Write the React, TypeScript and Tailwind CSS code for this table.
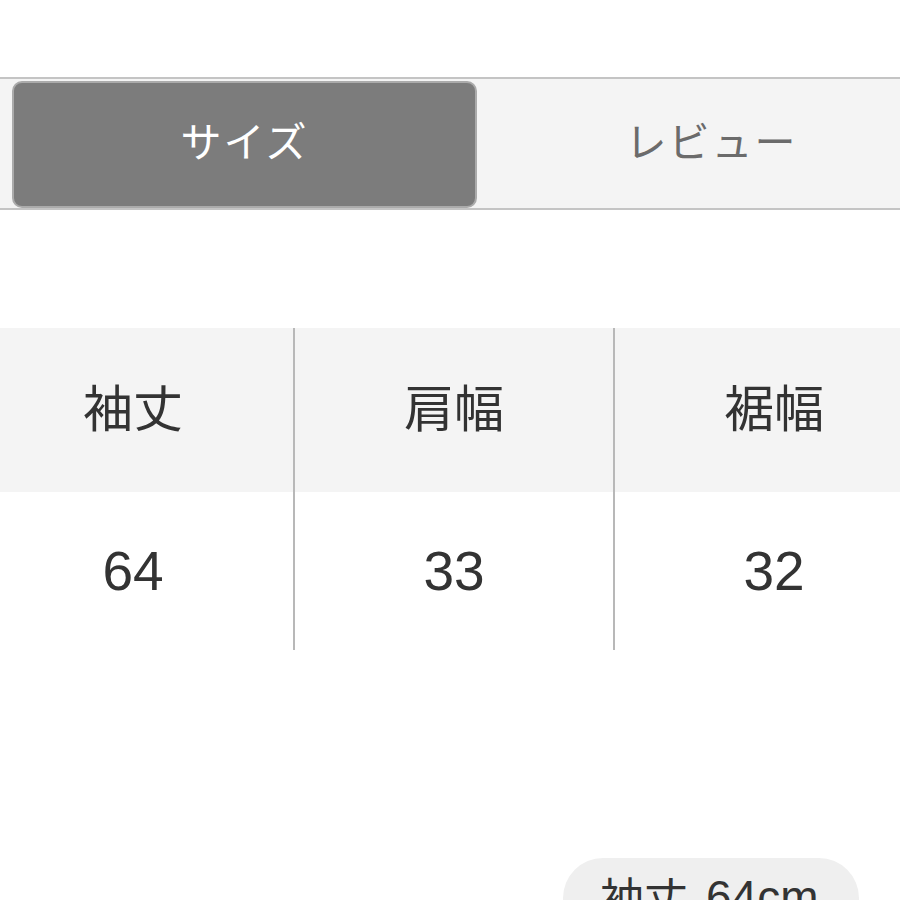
export default function App() {
  const heads = ["袖丈", "肩幅", "裾幅"];
  const vals = ["64", "33", "32"];

  return (
    <div
      className="w-[900px] h-[900px] bg-white overflow-hidden text-[#333]"
      style={{ fontFamily: '"Noto Sans CJK JP", "Noto Sans", sans-serif' }}
    >
      <div className="h-[77px]" />

      {/* tabs */}
      <div className="flex items-center h-[133px] border-y-2 border-[#c4c4c4] bg-[#f4f4f4] pl-[12px] pt-[1px]">
        <div className="shrink-0 w-[465px] h-[127px] rounded-[10px] bg-[#7c7c7c] border-2 border-[#ababab] flex items-center justify-center pb-[8px]">
          <span className="text-[41px] text-white tracking-[2px]">サイズ</span>
        </div>
        <div className="shrink-0 w-[465px] ml-[2px] flex items-center justify-center pb-[8px]">
          <span className="text-[41px] text-[#6b6b6b] tracking-[2px]">レビュー</span>
        </div>
      </div>

      <div className="h-[118px]" />

      {/* size table */}
      <div className="ml-[-27px] w-[960px] grid grid-cols-3">
        {heads.map((h, i) => (
          <div
            key={h}
            className={i === 0 ? "flex flex-col" : "flex flex-col border-l-2 border-[#b8b8b8]"}
          >
            <div className="h-[164px] bg-[#f4f4f4] flex items-center justify-center pb-[10px]">
              <span className="text-[50px] leading-none">{h}</span>
            </div>
            <div className="h-[158px] flex items-center justify-center">
              <span
                className="text-[55px] leading-none"
                style={{ fontFamily: '"Liberation Sans", sans-serif' }}
              >
                {vals[i]}
              </span>
            </div>
          </div>
        ))}
      </div>

      <div className="h-[208px]" />

      <div className="ml-[563px] w-[296px] h-[80px] rounded-[40px] bg-[#efefef] pl-[37px] pt-[16px] flex gap-[18px] items-start">
        <span className="text-[44px] leading-none text-[#333]">袖丈</span>
        <span
          className="text-[46px] leading-none text-[#333]"
          style={{ fontFamily: '"Liberation Sans", sans-serif' }}
        >
          64cm
        </span>
      </div>
    </div>
  );
}
